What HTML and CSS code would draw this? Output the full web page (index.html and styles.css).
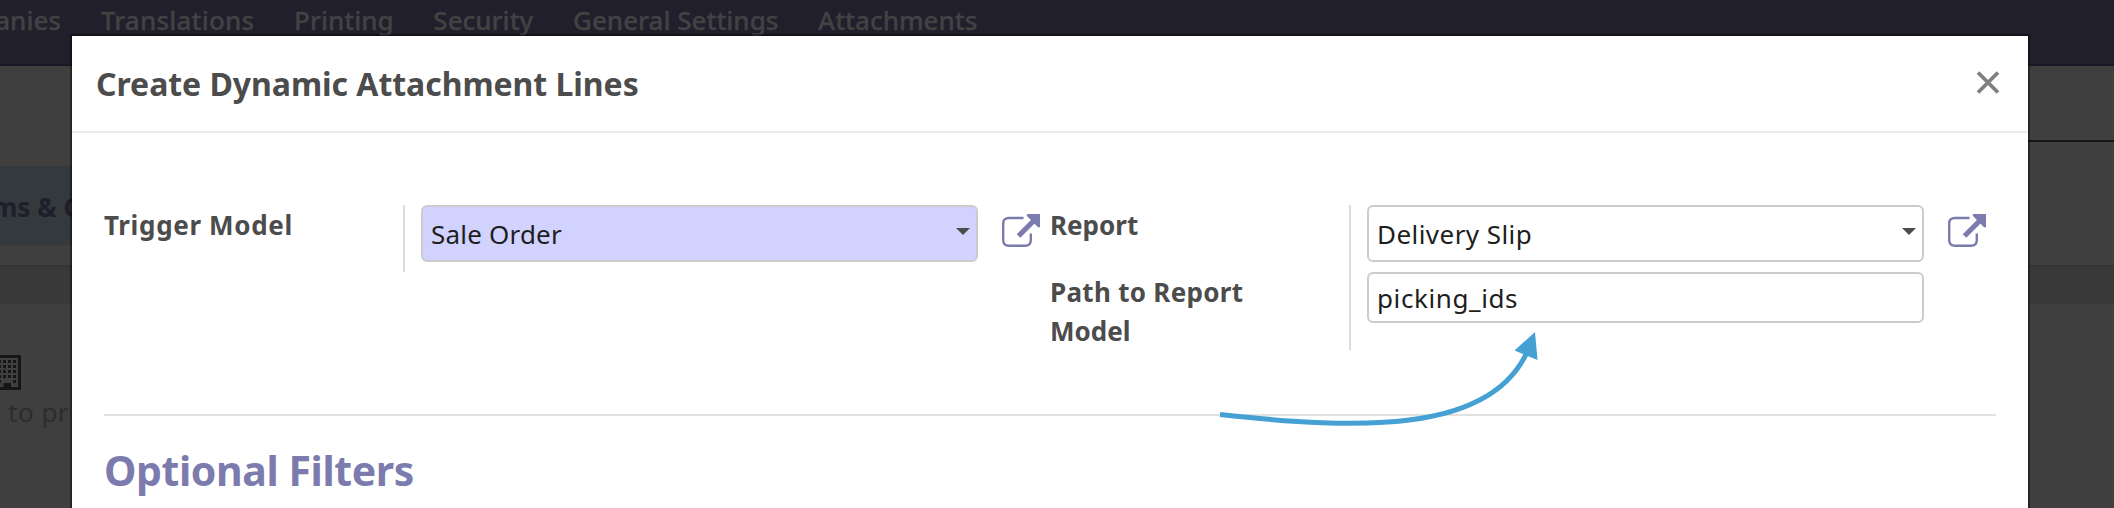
FILE: index.html
```html
<!DOCTYPE html>
<html lang="en">
<head>
<meta charset="utf-8">
<title>Create Dynamic Attachment Lines</title>
<link rel="stylesheet" href="styles.css">
</head>
<body>
<div class="page">
  <nav class="navbar">
    <span class="nav-companies">anies</span>
    <span class="nav-translations">Translations</span>
    <span>Printing</span>
    <span>Security</span>
    <span>General Settings</span>
    <span>Attachments</span>
  </nav>
  <div class="search-row"><div class="search-line"></div></div>
  <div class="setting-tab"><span>ms &amp; C</span></div>
  <div class="band"></div>
  <div class="setting">
    <svg class="building" width="21" height="35" viewBox="0 0 21 35">
      <path d="M-6 1.500H19.500V33.500H-6Z" fill="none" stroke="#161616" stroke-width="3"/>
      <path d="M3.500 28H11V33H3.500Z" fill="#161616"/>
      <path d="M-2 6.500H17M-2 11.500H17M-2 16.500H17M-2 21.500H17" stroke="#161616" stroke-width="3" stroke-dasharray="3 2"/>
      <path d="M0 26.500H1M13 26.500H16" stroke="#161616" stroke-width="3"/>
    </svg>
    <span>to pr</span>
  </div>
</div>

<div class="modal">
  <header class="modal-header">
    <h1>Create Dynamic Attachment Lines</h1>
    <svg class="close" width="24" height="24" viewBox="0 0 24 24"><path d="M2 1.500L22 21.500M22 1.500L2 21.500" stroke="#7f7f7f" stroke-width="3.800"/></svg>
  </header>
  <main class="modal-body">
    <div class="groups">
      <section class="group">
        <div class="labels"><label class="l-trigger">Trigger Model</label></div>
        <div class="fields">
          <div class="field-row">
            <div class="field select required"><span class="v-sale">Sale Order</span><i class="caret"></i></div>
            <svg class="external" width="38" height="33" viewBox="0 0 38 33"><use href="#ext"/></svg>
          </div>
        </div>
      </section>
      <section class="group">
        <div class="labels"><label>Report</label><label><span class="l-path">Path to Report</span><br>Model</label></div>
        <div class="fields tall">
          <div class="field-row">
            <div class="field select"><span class="v-delivery">Delivery Slip</span><i class="caret"></i></div>
            <svg class="external" width="38" height="33" viewBox="0 0 38 33"><g id="ext"><path d="M21.500 4H7Q1.200 4 1.200 9.500V26Q1.200 31.700 7 31.700H23Q28.800 31.700 28.800 26V19.500" fill="none" stroke="#7c7bad" stroke-width="2.400"/><path d="M16.500 22L32 6.500" stroke="#7c7bad" stroke-width="5.200"/><path d="M25.500 0H38V13Q36.500 14 35.500 12.800L25 2Q24 0.500 25.500 0Z" fill="#7c7bad"/></g></svg>
          </div>
          <div class="field text"><span class="v-picking">picking_ids</span></div>
        </div>
      </section>
    </div>
    <h2>Optional Filters</h2>
  </main>
</div>

<svg class="pointer-arrow" width="330" height="110" viewBox="1210 320 330 110">
  <path d="M1220 414.500C1360 430 1492 434 1528 350" fill="none" stroke="#45a1d4" stroke-width="5"/>
  <path d="M1535 332L1514.500 350.500L1537.500 360Z" fill="#45a1d4"/>
</svg>
</body>
</html>
```
FILE: styles.css
```css
* { box-sizing: border-box; }

body {
  margin: 0;
  width: 2114px;
  height: 508px;
  overflow: hidden;
  position: relative;
  background: #3f3f3f;
  font-family: "Noto Sans", "Open Sans", sans-serif;
  font-size: 26px;
  color: #4c4c4c;
}

.page { display: flex; flex-direction: column; height: 508px; }

.navbar {
  display: flex;
  gap: 39.7px;
  height: 66px;
  flex: none;
  background: #201f2b;
  border-bottom: 2px solid #1a1826;
  color: #424242;
  font-weight: 500;
  -webkit-text-stroke: .3px #424242;
  line-height: 40px;
  white-space: nowrap;
}
.nav-companies { margin-left: -4.800px; }
.nav-translations { letter-spacing: .2px; }

.search-row { height: 100px; flex: none; display: flex; justify-content: flex-end; align-items: flex-start; padding-top: 74px; }
.search-line { width: 86px; height: 2px; background: #151515; }

.setting-tab {
  height: 79px;
  flex: none;
  width: 72px;
  background: #33393c;
  color: #1f1e2b;
  font-weight: 700;
  line-height: 82px;
  overflow: hidden;
  white-space: nowrap;
}
.setting-tab span { margin-left: -8px; }

.band { height: 39px; flex: none; margin-top: 20px; background: #393939; border-top: 2px solid #343434; }

.setting { display: flex; flex-direction: column; width: 72px; padding-top: 51px; white-space: nowrap; color: #2c2d2e; }
.setting span { margin-left: 8px; line-height: 36px; padding-top: 4px; letter-spacing: .5px; }
.building { display: block; }

.modal {
  position: absolute;
  left: 70px;
  top: 34px;
  width: 1960px;
  height: 474px;
  overflow: hidden;
  border: 2px solid rgba(0, 0, 0, .4);
  border-bottom: 0;
  background: #fff;
  background-clip: padding-box;
}

.modal-header {
  display: flex;
  justify-content: space-between;
  align-items: flex-start;
  height: 97px;
  padding: 0 28px 0 24px;
  border-bottom: 2px solid #e9edf1;
}
.modal-header h1 { margin: 0; font-size: 32px; line-height: 44px; padding-top: 26px; letter-spacing: -.05px; white-space: nowrap; }
.close { margin-top: 35px; }

.modal-body { padding: 72px 32px 0; }

.groups { display: grid; grid-template-columns: 946px 946px; height: 211px; border-bottom: 2px solid #e1e1e1; align-items: start; }
.group { display: flex; align-items: flex-start; }
.labels { width: 299px; display: flex; flex-direction: column; gap: 28px; padding-top: 1px; font-weight: 700; line-height: 39px; }
.labels label { white-space: nowrap; }
.l-trigger { letter-spacing: .65px; }
.l-path { letter-spacing: .3px; }

.fields { border-left: 2px solid #dcdcdc; padding-left: 16px; height: 67px; }
.fields.tall { height: 145px; }
.field-row { display: flex; gap: 24px; margin-bottom: 10px; }
.field {
  display: flex;
  align-items: center;
  justify-content: space-between;
  width: 557px;
  border: 2px solid #ccc;
  border-radius: 6px;
  padding: 0 6px 0 8px;
  color: #1e1e1e;
  white-space: nowrap;
}
.select { height: 57px; }
.text { height: 51px; }
.required { background: #d2d2ff; }
.v-sale { letter-spacing: .2px; }
.v-delivery { letter-spacing: .45px; }
.v-picking { letter-spacing: .6px; }
.caret { border: 7px solid transparent; border-top-color: #4c4c4c; border-bottom: 0; margin-top: -4px; }
.external { margin-top: 9px; flex: none; }

h2 { margin: 0; padding-top: 23px; font-size: 41px; line-height: 62px; letter-spacing: -.4px; color: #7c7bad; white-space: nowrap; }

.pointer-arrow { position: absolute; left: 1210px; top: 320px; }
```
